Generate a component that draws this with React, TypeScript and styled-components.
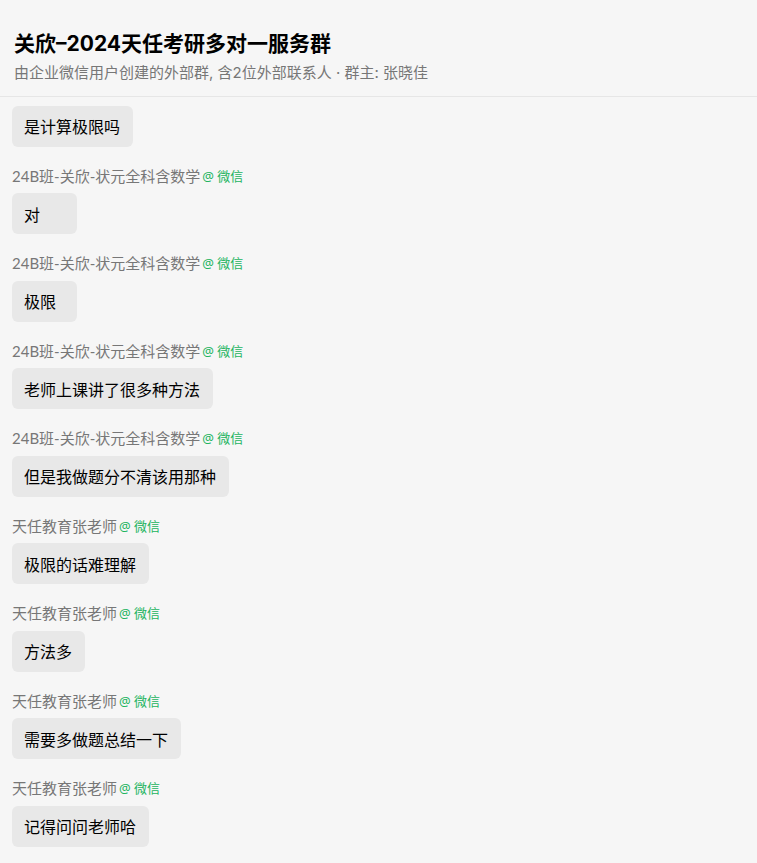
import { createGlobalStyle, styled } from 'styled-components';

const GlobalStyle = createGlobalStyle`
  html, body {
    margin: 0;
    padding: 0;
    background: #f6f6f6;
    font-family: Inter, "Noto Sans CJK SC", sans-serif;
  }
`;

const Page = styled.div`
  width: 757px;
  height: 863px;
  overflow: hidden;
  background: #f6f6f6;
`;

const Header = styled.header`
  height: 97px;
  box-sizing: border-box;
  padding: 30px 14px 0;
  border-bottom: 1px solid #e6e6e6;
`;

const Title = styled.h1`
  margin: 0;
  font-size: 21px;
  line-height: 28px;
  font-weight: 700;
  color: #000;
`;

const Subtitle = styled.p`
  margin: 3px 0 0;
  font-size: 15px;
  line-height: 24px;
  color: #777;
`;

const MessageList = styled.div`
  display: flex;
  flex-direction: column;
  align-items: flex-start;
  padding: 8.9px 12px 0;
`;

const Message = styled.div`
  display: flex;
  flex-direction: column;
  align-items: flex-start;
  margin-bottom: 19.5px;
`;

const Sender = styled.div`
  display: flex;
  align-items: center;
  height: 18px;
  margin-bottom: 9px;
  font-family: Lato, "Noto Sans CJK SC", sans-serif;
  font-size: 15px;
  color: #777;
`;

const WechatTag = styled.span`
  margin-left: 2px;
  font-family: "Noto Sans", "Noto Sans CJK SC", sans-serif;
  font-size: 13px;
  color: #22b45e;
`;

const Bubble = styled.div`
  box-sizing: border-box;
  height: 41px;
  min-width: 65px;
  padding: 0 12.5px 0 12px;
  display: flex;
  align-items: center;
  border-radius: 6px;
  background: #e8e8e8;
  font-size: 16px;
  color: #000;
`;

const GROUP_A = '24B班-关欣-状元全科含数学';
const GROUP_B = '天任教育张老师';

const messages = [
  { text: '是计算极限吗' },
  { sender: GROUP_A, text: '对' },
  { sender: GROUP_A, text: '极限' },
  { sender: GROUP_A, text: '老师上课讲了很多种方法' },
  { sender: GROUP_A, text: '但是我做题分不清该用那种' },
  { sender: GROUP_B, text: '极限的话难理解' },
  { sender: GROUP_B, text: '方法多' },
  { sender: GROUP_B, text: '需要多做题总结一下' },
  { sender: GROUP_B, text: '记得问问老师哈' },
];

const App = () => {
  return (
    <Page>
      <GlobalStyle />
      <Header>
        <Title>关欣–2024天任考研多对一服务群</Title>
        <Subtitle>由企业微信用户创建的外部群, 含2位外部联系人 · 群主: 张晓佳</Subtitle>
      </Header>
      <MessageList>
        {messages.map((message) => (
          <Message key={message.text}>
            {message.sender && (
              <Sender>
                {message.sender}
                <WechatTag>@ 微信</WechatTag>
              </Sender>
            )}
            <Bubble>{message.text}</Bubble>
          </Message>
        ))}
      </MessageList>
    </Page>
  );
};

export default App;
